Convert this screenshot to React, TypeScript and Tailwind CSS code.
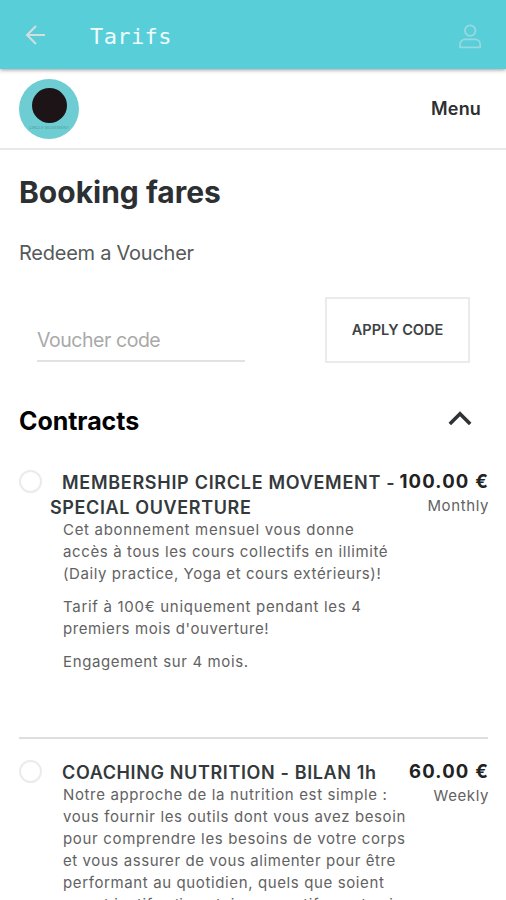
type Line = { text: string; className: string };

type Contract = {
  title: Line[];
  paragraphs: Line[][];
  price: string;
  period: string;
};

const CONTRACTS: Contract[] = [
  {
    title: [
      { text: "MEMBERSHIP CIRCLE MOVEMENT -", className: "pl-3 tracking-[0.71px]" },
      { text: "SPECIAL OUVERTURE", className: "tracking-[0.62px]" },
    ],
    paragraphs: [
      [
        { text: "Cet abonnement mensuel vous donne", className: "tracking-[0.69px]" },
        { text: "accès à tous les cours collectifs en illimité", className: "tracking-[0.62px]" },
        { text: "(Daily practice, Yoga et cours extérieurs)!", className: "tracking-[0.57px]" },
      ],
      [
        { text: "Tarif à 100€ uniquement pendant les 4", className: "tracking-[0.7px]" },
        { text: "premiers mois d'ouverture!", className: "tracking-[0.59px]" },
      ],
      [{ text: "Engagement sur 4 mois.", className: "tracking-[0.63px]" }],
    ],
    price: "100.00 €",
    period: "Monthly",
  },
  {
    title: [{ text: "COACHING NUTRITION - BILAN 1h", className: "pl-3 tracking-[0.63px]" }],
    paragraphs: [
      [
        { text: "Notre approche de la nutrition est simple :", className: "tracking-[0.64px]" },
        { text: "vous fournir les outils dont vous avez besoin", className: "tracking-[0.62px]" },
        { text: "pour comprendre les besoins de votre corps", className: "tracking-[0.67px]" },
        { text: "et vous assurer de vous alimenter pour être", className: "tracking-[0.58px]" },
        { text: "performant au quotidien, quels que soient", className: "tracking-[0.62px]" },
        { text: "vos objectifs alimentaires, sportifs ou de vie", className: "tracking-[0.62px]" },
      ],
    ],
    price: "60.00 €",
    period: "Weekly",
  },
];

function TopBar() {
  return (
    <header className="relative z-10 flex h-[69px] shrink-0 items-center bg-[#58ced9] pt-1 pr-6 pl-6 shadow-[0_1px_4px_rgba(0,0,0,0.4)]">
      <button className="-mt-1">
        <svg width="24" height="24" viewBox="0 0 24 24" fill="none" stroke="#d3dedd" strokeWidth="2">
          <path d="M21 12H3M12 3L3 12l9 9" />
        </svg>
      </button>
      <h1 className="ml-[42px] font-['DejaVu_Sans_Mono',monospace] text-[22px] leading-8 tracking-[0.4px] text-[#effcfc]">
        Tarifs
      </h1>
      <button className="ml-auto">
        <svg width="24" height="26" viewBox="0 0 24 26" fill="none" stroke="#97d9de" strokeWidth="1.8">
          <circle cx="12.2" cy="6.6" r="5.3" />
          <path d="M2 23.4v-3a5 5 0 0 1 5-5h10.2a5 5 0 0 1 5 5v3z" />
        </svg>
      </button>
    </header>
  );
}

function NavBar() {
  return (
    <nav className="flex h-[81px] shrink-0 items-center justify-between border-b-2 border-[#e9e9e9] pr-[25px] pl-[19px]">
      <div className="flex size-[60px] flex-col items-center rounded-full bg-[#6dcdd3] pt-[9px]">
        <div className="size-[35px] rounded-full bg-[#1d1417]" />
        <span className="mt-0.5 text-[4px] leading-[5px] tracking-[0.1px] whitespace-nowrap text-[#4f9ba0]">
          CIRCLE MOVEMENT
        </span>
      </div>
      <button className="text-[18px] font-semibold tracking-[0.15px] text-[#2c3033]">Menu</button>
    </nav>
  );
}

function VoucherForm() {
  return (
    <div className="mt-[29px] flex items-start justify-between pr-[17px] pl-[18px]">
      <div className="mt-[26px] h-[39px] w-[208px] border-b-2 border-[#e2e2e2] text-[19.5px] leading-[34px] tracking-[-0.45px] text-[#a9a9a9]">
        Voucher code
      </div>
      <button className="h-[66px] w-[145px] border-2 border-[#ebebeb] text-[14.5px] font-semibold text-[#3c4245]">
        APPLY CODE
      </button>
    </div>
  );
}

function ContractRow({ contract }: { contract: Contract }) {
  return (
    <div className="flex whitespace-nowrap">
      <div className="size-[23px] shrink-0 rounded-full border-2 border-[#ebebeb]" />
      <div className="w-[330px] shrink-0 pl-2">
        <h3 className="text-[18px] leading-[25px] font-semibold text-[#34393c]">
          {contract.title.map((line) => (
            <span key={line.text} className={`block ${line.className}`}>
              {line.text}
            </span>
          ))}
        </h3>
        <div className="-mt-px space-y-[11px] pl-[13px] text-[15px] leading-[22.1px] text-[#626262]">
          {contract.paragraphs.map((lines, i) => (
            <p key={i}>
              {lines.map((line) => (
                <span key={line.text} className={`block ${line.className}`}>
                  {line.text}
                </span>
              ))}
            </p>
          ))}
        </div>
      </div>
      <div className="-mt-0.5 -mr-[2px] ml-auto flex flex-col items-end">
        <span className="text-[18.5px] leading-[26px] font-bold tracking-[1.2px] text-[#222]">{contract.price}</span>
        <span className="text-[15px] leading-[24px] tracking-[0.6px] text-[#626262]">{contract.period}</span>
      </div>
    </div>
  );
}

export default function App() {
  return (
    <div className="flex h-[900px] w-[506px] flex-col overflow-hidden bg-white font-[Inter,sans-serif]">
      <TopBar />
      <NavBar />
      <main className="px-[19px] pt-[22px]">
        <h2 className="text-[30px] leading-10 font-bold text-[#2c3033]">Booking fares</h2>
        <p className="mt-[26px] text-[20px] leading-[30px] tracking-[-0.25px] text-[#55595a]">Redeem a Voucher</p>
        <VoucherForm />
        <div className="mt-10 flex h-9 items-center justify-between pr-[15px]">
          <h2 className="text-[25px] leading-9 font-bold tracking-[-0.05px] text-black">Contracts</h2>
          <svg className="-mt-1.5" width="24" height="16" viewBox="0 0 24 16" fill="none" stroke="#303335" strokeWidth="3.6">
            <path d="M1.8 14L12 3.8 22.2 14" />
          </svg>
        </div>
        <div className="mt-[31px]">
          <ContractRow contract={CONTRACTS[0]} />
          <hr className="-mr-px mt-[63px] mb-[21px] border-t-2 border-[#dedede]" />
          <ContractRow contract={CONTRACTS[1]} />
        </div>
      </main>
    </div>
  );
}
